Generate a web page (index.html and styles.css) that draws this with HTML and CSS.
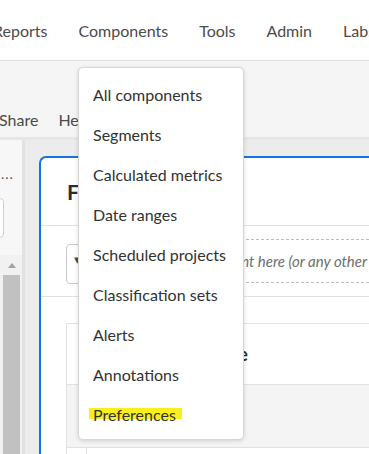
FILE: index.html
```html
<!DOCTYPE html>
<html lang="en">
<head>
  <meta charset="UTF-8" />
  <meta name="viewport" content="width=device-width, initial-scale=1.0" />
  <title>Workspace</title>
  <link rel="stylesheet" href="styles.css">
</head>

<body>
  <div class="top-nav">
    <span class="nav-item first">Reports</span>
    <span class="nav-item">Components</span>
    <span class="nav-item">Tools</span>
    <span class="nav-item">Admin</span>
    <span class="nav-item">Labs</span>
  </div>

  <div class="toolbar">
    <span class="tool first">Share</span>
    <span class="tool">Help</span>
  </div>

  <div class="workspace">
    <div class="rail">
      <div class="rail-label">...</div>
      <div class="rail-search"></div>
      <div class="scrollbar">
        <div class="scroll-arrow"></div>
        <div class="scroll-thumb"></div>
      </div>
    </div>
    <div class="rail-divider"></div>

    <div class="canvas">
      <div class="panel">
        <div class="panel-head">Freeform</div>
        <div class="drop-row">
          <div class="segment-select">▾</div>
          <div class="drop-zone">Drop a segment here (or any other component)</div>
        </div>
        <div class="table-area">
          <div class="table-card">
            <div class="table-title">Freeform table</div>
            <div class="table-bar"></div>
            <div class="table-body"></div>
          </div>
        </div>
      </div>
    </div>
  </div>

  <ul class="menu">
    <li>All components</li>
    <li>Segments</li>
    <li>Calculated metrics</li>
    <li>Date ranges</li>
    <li>Scheduled projects</li>
    <li>Classification sets</li>
    <li>Alerts</li>
    <li>Annotations</li>
    <li><span class="marked">Preferences</span></li>
  </ul>
</body>
</html>
```

FILE: styles.css
```css
  html, body {
    margin: 0;
    height: 100%;
    overflow: hidden;
  }

  body {
    font-family: Lato, "Open Sans", sans-serif;
    color: #4b4b4b;
    background-color: #ececec;
    display: flex;
    flex-direction: column;
  }

  .top-nav {
    height: 61px;
    flex: none;
    background: white;
    border-bottom: 1px solid #dcdcdc;
    display: flex;
    align-items: center;
    gap: 31px;
    font-size: 16px;
    white-space: nowrap;
    box-sizing: border-box;
  }

  .nav-item.first {
    margin-left: -7px;
  }

  .toolbar {
    height: 79px;
    flex: none;
    background: #f5f5f5;
    border-bottom: 3px solid #e6e6e6;
    display: flex;
    align-items: flex-end;
    gap: 20px;
    padding-bottom: 8px;
    box-sizing: border-box;
    font-size: 16px;
  }

  .tool.first {
    margin-left: -1px;
  }

  .workspace {
    flex: 1;
    display: flex;
    min-height: 0;
  }

  .rail {
    width: 22px;
    flex: none;
    background: #f7f7f7;
    display: flex;
    flex-direction: column;
  }

  .rail-label {
    margin: 26px 0 0 1px;
    font-size: 14px;
    line-height: 16px;
    letter-spacing: 1px;
    color: #555;
  }

  .rail-search {
    margin: 16px 0 0 -100px;
    width: 102px;
    height: 38px;
    background: white;
    border: 1px solid #cfcfcf;
    border-radius: 4px;
  }

  .scrollbar {
    margin-top: 17px;
    flex: 1;
    background: #f1f1f1;
    padding: 0 2px 0 3px;
    display: flex;
    flex-direction: column;
  }

  .scroll-arrow {
    width: 0;
    height: 0;
    margin: 8px auto 7px;
    border-left: 4px solid transparent;
    border-right: 4px solid transparent;
    border-bottom: 5px solid #a3a3a3;
  }

  .scroll-thumb {
    flex: 1;
    background: #c1c1c1;
  }

  .rail-divider {
    width: 3px;
    flex: none;
    background: #e2e2e2;
  }

  .canvas {
    flex: 1;
    padding: 16px 0 0 14px;
    min-width: 0;
  }

  .panel {
    margin-right: -40px;
    height: 400px;
    background: white;
    border: 2px solid #1473e6;
    border-right: none;
    border-bottom: none;
    border-radius: 7px 0 0 0;
  }

  .panel-head {
    height: 67px;
    padding-left: 26px;
    display: flex;
    align-items: center;
    font-size: 21px;
    font-weight: bold;
    color: #2c2c2c;
    border-bottom: 1px solid #e1e1e1;
  }

  .drop-row {
    display: flex;
    gap: 13px;
    padding: 13px 0 12px 25px;
    border-bottom: 1px solid #e1e1e1;
  }

  .segment-select {
    flex: none;
    width: 77px;
    height: 40px;
    border: 1px solid #cacaca;
    border-radius: 4px;
    box-sizing: border-box;
    margin-top: 5px;
    padding: 6px 0 0 7px;
    font-size: 13px;
    color: #4b4b4b;
  }

  .drop-zone {
    flex: 1;
    min-width: 0;
    overflow: hidden;
    height: 44px;
    box-sizing: border-box;
    border-top: 1px dashed #bdbdbd;
    border-bottom: 1px dashed #bdbdbd;
    display: flex;
    align-items: center;
    font-size: 15px;
    font-style: italic;
    color: #6e6e6e;
    white-space: nowrap;
  }

  .table-area {
    padding: 26px 0 0 25px;
  }

  .table-card {
    border-top: 1px solid #e1e1e1;
    border-left: 1px solid #e1e1e1;
  }

  .table-title {
    height: 60px;
    display: flex;
    align-items: center;
    padding-left: 63px;
    font-size: 18px;
    font-weight: bold;
    color: #2c2c2c;
    border-bottom: 1px solid #e1e1e1;
  }

  .table-bar {
    height: 62px;
    background: #f4f4f4;
    border-bottom: 1px solid #e1e1e1;
  }

  .table-body {
    margin-left: 19px;
    height: 40px;
    border-left: 1px solid #e1e1e1;
  }

  .menu {
    position: absolute;
    top: 67px;
    left: 78px;
    width: 164px;
    margin: 0;
    padding: 7px 0 4px;
    list-style: none;
    background: white;
    border: 1px solid #d6d6d6;
    border-radius: 5px;
    box-shadow: 0 1px 4px rgba(0, 0, 0, 0.15);
    font-size: 16px;
    color: #323232;
  }

  .menu li {
    padding: 10px 14px;
    line-height: 20px;
    white-space: nowrap;
  }

  .marked {
    display: inline-block;
    margin-left: -4px;
    padding: 0 6px 0 4px;
    background: linear-gradient(transparent 3px, #f8ef1c 3px, #f8ef1c 14px, transparent 14px);
  }
```
